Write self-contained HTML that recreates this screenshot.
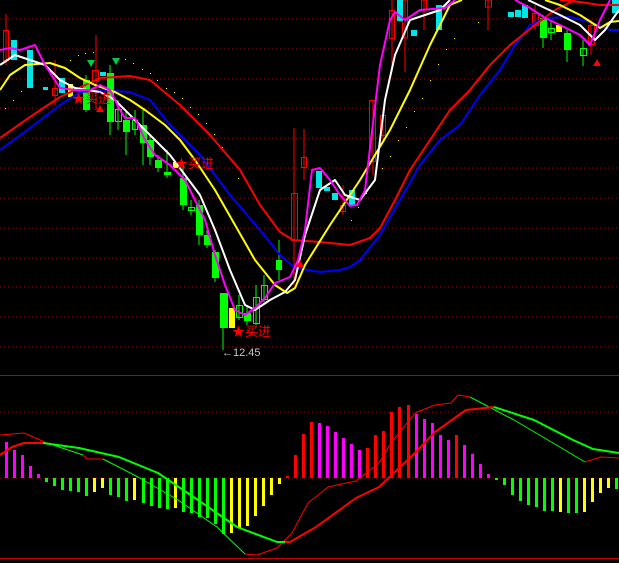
<!DOCTYPE html>
<html><head><meta charset="utf-8"><style>
html,body{margin:0;padding:0;background:#000;width:619px;height:563px;overflow:hidden}
svg{display:block}
text{font-family:"Liberation Sans","Noto Sans CJK SC",sans-serif}
</style></head><body>
<svg width="619" height="563" viewBox="0 0 619 563" xmlns="http://www.w3.org/2000/svg">
<rect width="619" height="563" fill="#000"/>
<g stroke="#a00000" stroke-width="1" stroke-dasharray="1,3">
<line x1="0" y1="19" x2="619" y2="19"/><line x1="0" y1="49" x2="619" y2="49"/><line x1="0" y1="79" x2="619" y2="79"/><line x1="0" y1="108" x2="619" y2="108"/><line x1="0" y1="138" x2="619" y2="138"/><line x1="0" y1="168" x2="619" y2="168"/><line x1="0" y1="198" x2="619" y2="198"/><line x1="0" y1="228" x2="619" y2="228"/><line x1="0" y1="258" x2="619" y2="258"/><line x1="0" y1="287" x2="619" y2="287"/><line x1="0" y1="317" x2="619" y2="317"/><line x1="0" y1="347" x2="619" y2="347"/>
<line x1="0" y1="412" x2="619" y2="412"/><line x1="0" y1="478" x2="619" y2="478"/>
</g>
<line x1="0" y1="375.5" x2="619" y2="375.5" stroke="#c00000"/>
<line x1="0" y1="558.5" x2="619" y2="558.5" stroke="#c00000"/>
<!-- yellow dots -->
<g fill="#ffff00">
<rect x="5" y="108" width="1" height="1"/><rect x="13" y="100" width="1" height="1"/><rect x="21" y="91" width="1" height="1"/><rect x="70" y="60" width="1" height="1"/><rect x="78" y="55" width="1" height="1"/><rect x="85" y="53" width="1" height="1"/><rect x="93" y="52" width="1" height="1"/><rect x="125" y="59" width="1" height="1"/><rect x="133" y="63" width="1" height="1"/><rect x="142" y="69" width="1" height="1"/><rect x="150" y="73" width="1" height="1"/><rect x="157" y="80" width="1" height="1"/><rect x="166" y="88" width="1" height="1"/><rect x="174" y="92" width="1" height="1"/><rect x="182" y="98" width="1" height="1"/><rect x="190" y="107" width="1" height="1"/><rect x="198" y="114" width="1" height="1"/><rect x="206" y="123" width="1" height="1"/><rect x="214" y="134" width="1" height="1"/><rect x="222" y="147" width="1" height="1"/><rect x="238" y="178" width="1" height="1"/><rect x="351" y="220" width="1" height="1"/><rect x="358" y="207" width="1" height="1"/><rect x="366" y="193" width="1" height="1"/><rect x="374" y="180" width="1" height="1"/><rect x="382" y="168" width="1" height="1"/><rect x="390" y="156" width="1" height="1"/><rect x="398" y="140" width="1" height="1"/><rect x="406" y="127" width="1" height="1"/><rect x="414" y="111" width="1" height="1"/><rect x="422" y="98" width="1" height="1"/><rect x="430" y="80" width="1" height="1"/><rect x="438" y="64" width="1" height="1"/><rect x="446" y="49" width="1" height="1"/><rect x="454" y="38" width="1" height="1"/><rect x="478" y="22" width="1" height="1"/>
</g>
<!-- candles -->
<g stroke-width="1">
<g stroke="#ff0000" fill="none">
<line x1="6" y1="14" x2="6" y2="65"/><rect x="3.5" y="30.5" width="5" height="30"/>
<line x1="55" y1="60" x2="55" y2="105"/><rect x="52.5" y="88.5" width="5" height="7"/>
<line x1="96" y1="35" x2="96" y2="110"/><rect x="92.5" y="70.5" width="6" height="10"/>
<line x1="294" y1="128" x2="294" y2="285"/><rect x="291.5" y="193.5" width="6" height="47"/>
<line x1="304" y1="129" x2="304" y2="180"/><rect x="301.5" y="157.5" width="5" height="10"/>
<line x1="343" y1="185" x2="343" y2="215"/><rect x="340.5" y="205.5" width="5" height="6"/>
<line x1="373" y1="100" x2="373" y2="175"/><rect x="369.5" y="100.5" width="6" height="61"/>
<line x1="383" y1="110" x2="383" y2="140"/><rect x="380.5" y="115.5" width="5" height="20"/>
<line x1="392" y1="0" x2="392" y2="72"/><rect x="389.5" y="10.5" width="5" height="28"/>
<line x1="405" y1="0" x2="405" y2="72"/><rect x="402.5" y="0" width="5" height="38"/>
<line x1="424" y1="0" x2="424" y2="30"/><rect x="421.5" y="0" width="5" height="10"/>
<line x1="488" y1="0" x2="488" y2="30"/><rect x="485.5" y="0" width="6" height="7"/>
<line x1="535" y1="5" x2="535" y2="30"/><rect x="532.5" y="13.5" width="6" height="12"/>
<line x1="591" y1="20" x2="591" y2="55"/><rect x="588.5" y="25.5" width="6" height="19"/>
</g>
<g fill="#00e5e5">
<rect x="11" y="40" width="6" height="20"/><rect x="27" y="50" width="6" height="38"/><rect x="43" y="87" width="5" height="3"/><rect x="59" y="78" width="6" height="15"/><rect x="100" y="72" width="6" height="4"/>
<rect x="316" y="171" width="6" height="17"/><rect x="324" y="187" width="6" height="4"/><rect x="332" y="193" width="6" height="7"/><rect x="349" y="190" width="6" height="15"/><rect x="397" y="0" width="6" height="21"/><rect x="411" y="30" width="6" height="6"/><rect x="436" y="5" width="6" height="25"/><rect x="508" y="12" width="6" height="5"/><rect x="515" y="10" width="6" height="7"/><rect x="522" y="5" width="6" height="13"/><rect x="612" y="0" width="7" height="13"/>
</g>
<g stroke="#00ff00" fill="#00ff00">
<line x1="110" y1="65" x2="110" y2="135"/><rect x="107.5" y="73.5" width="6" height="48"/>
<line x1="126" y1="110" x2="126" y2="155"/><rect x="123.5" y="120.5" width="6" height="11"/>
<line x1="143" y1="110" x2="143" y2="165"/><rect x="140.5" y="125.5" width="6" height="17"/>
<line x1="150" y1="135" x2="150" y2="165"/><rect x="147.5" y="140.5" width="6" height="16"/>
<line x1="158" y1="155" x2="158" y2="172"/><rect x="155.5" y="160.5" width="6" height="7"/>
<line x1="167" y1="150" x2="167" y2="178"/><rect x="164.5" y="172.5" width="6" height="2"/>
<line x1="183" y1="165" x2="183" y2="210"/><rect x="180.5" y="178.5" width="6" height="26"/>
<line x1="199" y1="200" x2="199" y2="245"/><rect x="196.5" y="205.5" width="6" height="29"/>
<line x1="207" y1="230" x2="207" y2="248"/><rect x="204.5" y="235.5" width="6" height="9"/>
<line x1="215" y1="250" x2="215" y2="282"/><rect x="212.5" y="252.5" width="6" height="25"/>
<line x1="223" y1="293" x2="223" y2="350"/><rect x="220.5" y="293.5" width="7" height="34"/>
<line x1="247" y1="305" x2="247" y2="325"/><rect x="244.5" y="313.5" width="6" height="7"/>
<line x1="279" y1="240" x2="279" y2="280"/><rect x="276.5" y="260.5" width="5" height="9"/>
<line x1="86" y1="75" x2="86" y2="112"/><rect x="83.5" y="80.5" width="6" height="29"/>
<line x1="543" y1="15" x2="543" y2="48"/><rect x="540.5" y="18.5" width="6" height="19"/>
<line x1="567" y1="30" x2="567" y2="62"/><rect x="564.5" y="33.5" width="6" height="16"/>
</g>
<g stroke="#00ff00" fill="none">
<line x1="118" y1="100" x2="118" y2="130"/><rect x="115.5" y="109.5" width="6" height="12"/>
<line x1="135" y1="110" x2="135" y2="135"/><rect x="132.5" y="120.5" width="5" height="9"/>
<line x1="191" y1="200" x2="191" y2="215"/><rect x="188.5" y="207.5" width="6" height="3"/>
<line x1="239" y1="295" x2="239" y2="320"/><rect x="236.5" y="305.5" width="6" height="12"/>
<line x1="256" y1="285" x2="256" y2="325"/><rect x="253.5" y="297.5" width="6" height="26"/>
<line x1="264" y1="275" x2="264" y2="302"/><rect x="261.5" y="285.5" width="6" height="14"/>
<line x1="583" y1="40" x2="583" y2="66"/><rect x="580.5" y="48.5" width="6" height="7"/>
<line x1="551" y1="20" x2="551" y2="40"/><rect x="548.5" y="28.5" width="6" height="4"/>
</g>
<rect x="68" y="84" width="5" height="13" fill="#ffff00"/>
<rect x="173" y="162" width="5" height="6" fill="#ffff00"/>
<rect x="229" y="308" width="6" height="20" fill="#ffff00"/>
<rect x="556" y="25" width="6" height="7" fill="#ffff00"/>
</g>
<!-- MA lines -->
<g fill="none" stroke-width="2" stroke-linejoin="round">
<polyline stroke="#0000ff" points="0,150 30,128 60,105 80,92 100,90 130,92 150,100 170,125 200,155 230,195 260,230 280,255 295,268 320,272 340,270 350,267 360,260 380,235 400,200 420,165 440,140 460,125 480,95 500,70 515,45 530,25 545,18 570,17 590,22 610,30 619,30"/>
<polyline stroke="#ff0000" points="0,138 30,117 60,97 100,78 130,76 150,80 180,105 210,135 240,170 260,205 280,232 293,240 320,242 350,245 370,238 380,228 395,200 410,170 430,140 450,110 470,90 490,65 510,45 535,25 555,10 575,0"/>
<polyline stroke="#ff0000" points="560,0 580,2 600,5 619,5"/>
<polyline stroke="#ffff00" points="0,90 10,75 25,65 50,63 65,68 80,78 95,85 115,92 130,100 145,110 165,125 180,140 195,160 215,190 235,225 255,260 275,285 287,293 295,288 305,265 330,225 360,180 390,130 410,90 430,45 450,5 462,0"/>
<polyline stroke="#ffff00" points="545,0 560,5 580,15 600,28 610,22 619,21"/>
<polyline stroke="#ffffff" points="0,65 15,55 30,60 45,65 60,80 75,88 100,92 115,100 135,120 150,135 170,155 185,175 200,195 215,230 230,270 245,305 255,310 270,300 285,292 295,280 305,235 320,190 335,180 345,195 360,200 375,180 385,100 395,55 410,20 440,10 450,0"/>
<polyline stroke="#ffffff" points="528,0 545,8 560,15 580,25 595,40 605,30 619,10"/>
<polyline stroke="#ff00ff" points="0,50 10,48 20,50 35,45 45,65 60,88 75,90 90,90 100,85 110,90 120,110 125,118 135,118 145,140 155,155 170,165 185,180 195,200 205,220 215,255 225,285 235,310 245,315 255,308 265,298 275,283 290,277 298,260 305,230 312,170 320,168 330,180 340,195 350,206 357,205 365,190 380,65 390,20 395,12 405,20 420,10 445,8 455,0"/>
<polyline stroke="#ff00ff" points="515,0 530,8 545,18 560,25 580,35 590,45 600,20 610,0"/>
</g>
<!-- signals -->
<g fill="#00cc44"><polygon points="87,60 95,60 91,67"/><polygon points="112,58 120,58 116,65"/></g>
<g fill="#ff0000"><polygon points="96,112 104,112 100,105"/><polygon points="296,267 304,267 300,260"/><polygon points="593,66 601,66 597,59"/></g>
<g fill="#ff0000" font-size="13">
<text x="72" y="103">★买进</text>
<text x="175" y="168">★买进</text>
<text x="232" y="336">★买进</text>
</g>
<text x="222" y="356" fill="#c8c8c8" font-size="11">←12.45</text>
<!-- MACD bars -->
<g>
<rect x="5" y="442" width="3" height="36" fill="#ff00ff"/><rect x="13" y="450" width="3" height="28" fill="#ff00ff"/><rect x="21" y="455" width="3" height="23" fill="#ff00ff"/><rect x="29" y="466" width="3" height="12" fill="#ff00ff"/><rect x="37" y="474" width="3" height="4" fill="#ff00ff"/>
<rect x="45" y="478" width="3" height="4" fill="#00ff00"/><rect x="53" y="478" width="3" height="8" fill="#00ff00"/><rect x="61" y="478" width="3" height="12" fill="#00ff00"/><rect x="69" y="478" width="3" height="13" fill="#00ff00"/><rect x="77" y="478" width="3" height="14" fill="#00ff00"/><rect x="85" y="478" width="3" height="18" fill="#00ff00"/><rect x="93" y="478" width="3" height="14" fill="#ffff00"/><rect x="101" y="478" width="3" height="10" fill="#ffff00"/><rect x="109" y="478" width="3" height="17" fill="#00ff00"/><rect x="117" y="478" width="3" height="19" fill="#00ff00"/><rect x="125" y="478" width="3" height="23" fill="#00ff00"/><rect x="133" y="478" width="3" height="22" fill="#ffff00"/><rect x="142" y="478" width="3" height="25" fill="#00ff00"/><rect x="150" y="478" width="3" height="28" fill="#00ff00"/><rect x="158" y="478" width="3" height="30" fill="#00ff00"/><rect x="166" y="478" width="3" height="31" fill="#00ff00"/><rect x="174" y="478" width="3" height="30" fill="#ffff00"/><rect x="182" y="478" width="3" height="34" fill="#00ff00"/><rect x="190" y="478" width="3" height="35" fill="#00ff00"/><rect x="198" y="478" width="3" height="39" fill="#00ff00"/><rect x="206" y="478" width="3" height="40" fill="#00ff00"/><rect x="214" y="478" width="3" height="46" fill="#00ff00"/><rect x="222" y="478" width="3" height="56" fill="#00ff00"/><rect x="230" y="478" width="3" height="55" fill="#ffff00"/><rect x="238" y="478" width="3" height="50" fill="#ffff00"/><rect x="246" y="478" width="3" height="48" fill="#ffff00"/><rect x="254" y="478" width="3" height="38" fill="#ffff00"/><rect x="262" y="478" width="3" height="28" fill="#ffff00"/><rect x="270" y="478" width="3" height="17" fill="#ffff00"/><rect x="278" y="478" width="3" height="6" fill="#ffff00"/>
<rect x="286" y="476" width="3" height="2" fill="#ff0000"/><rect x="294" y="455" width="3" height="23" fill="#ff0000"/><rect x="302" y="434" width="3" height="44" fill="#ff0000"/><rect x="310" y="422" width="3" height="56" fill="#ff0000"/>
<rect x="318" y="423" width="3" height="55" fill="#ff00ff"/><rect x="326" y="426" width="3" height="52" fill="#ff00ff"/><rect x="334" y="432" width="3" height="46" fill="#ff00ff"/><rect x="342" y="438" width="3" height="40" fill="#ff00ff"/><rect x="350" y="444" width="3" height="34" fill="#ff00ff"/><rect x="358" y="450" width="3" height="28" fill="#ff00ff"/>
<rect x="366" y="448" width="3" height="30" fill="#ff0000"/><rect x="374" y="435" width="3" height="43" fill="#ff0000"/><rect x="382" y="431" width="3" height="47" fill="#ff0000"/><rect x="390" y="412" width="3" height="66" fill="#ff0000"/><rect x="398" y="407" width="3" height="71" fill="#ff0000"/><rect x="407" y="405" width="3" height="73" fill="#ff0000"/>
<rect x="415" y="414" width="3" height="64" fill="#ff00ff"/><rect x="423" y="419" width="3" height="59" fill="#ff00ff"/><rect x="431" y="423" width="3" height="55" fill="#ff00ff"/><rect x="439" y="435" width="3" height="43" fill="#ff00ff"/><rect x="447" y="440" width="3" height="38" fill="#ff00ff"/><rect x="455" y="435" width="3" height="43" fill="#ff0000"/><rect x="463" y="445" width="3" height="33" fill="#ff00ff"/><rect x="471" y="454" width="3" height="24" fill="#ff00ff"/><rect x="479" y="464" width="3" height="14" fill="#ff00ff"/><rect x="487" y="474" width="3" height="4" fill="#ff00ff"/>
<rect x="495" y="478" width="3" height="2" fill="#00ff00"/><rect x="503" y="478" width="3" height="7" fill="#00ff00"/><rect x="511" y="478" width="3" height="17" fill="#00ff00"/><rect x="519" y="478" width="3" height="23" fill="#00ff00"/><rect x="527" y="478" width="3" height="27" fill="#00ff00"/><rect x="535" y="478" width="3" height="29" fill="#00ff00"/><rect x="543" y="478" width="3" height="33" fill="#00ff00"/><rect x="551" y="478" width="3" height="33" fill="#00ff00"/><rect x="559" y="478" width="3" height="34" fill="#ffff00"/><rect x="567" y="478" width="3" height="35" fill="#00ff00"/><rect x="575" y="478" width="3" height="35" fill="#00ff00"/><rect x="583" y="478" width="3" height="34" fill="#ffff00"/><rect x="591" y="478" width="3" height="24" fill="#ffff00"/><rect x="599" y="478" width="3" height="15" fill="#ffff00"/><rect x="607" y="478" width="3" height="10" fill="#ffff00"/><rect x="615" y="478" width="3" height="11" fill="#00ff00"/>
</g>
<!-- MACD lines -->
<g fill="none" stroke-linejoin="round">
<polyline stroke="#ff0000" stroke-width="1" points="0,435 24,433 47,443"/>
<polyline stroke="#00ff00" stroke-width="1" points="47,443 83,455"/>
<polyline stroke="#ff0000" stroke-width="1" points="83,455 87,459 103,459"/>
<polyline stroke="#00ff00" stroke-width="1" points="103,459 138,477 178,500 217,527 245,554"/>
<polyline stroke="#ff0000" stroke-width="1" points="245,554 257,555 277,548 292,533 308,503 328,487 356,481 379,463 391,443 415,413 435,405 451,403 458,395 470,397"/>
<polyline stroke="#00ff00" stroke-width="1" points="470,397 514,420 553,443 585,462"/>
<polyline stroke="#ff0000" stroke-width="1" points="585,462 601,457 619,458"/>
<polyline stroke="#ff0000" stroke-width="2" points="0,455 12,447 24,443 43,443"/>
<polyline stroke="#00ff00" stroke-width="2" points="43,443 79,448 119,457 158,473 198,500 237,527 277,542 285,542"/>
<polyline stroke="#ff0000" stroke-width="2" points="285,542 290,542 316,527 356,498 379,487 415,453 435,432 466,410 494,407"/>
<polyline stroke="#00ff00" stroke-width="2" points="494,407 534,420 573,440 593,449 619,453"/>
</g>
</svg>
</body></html>
